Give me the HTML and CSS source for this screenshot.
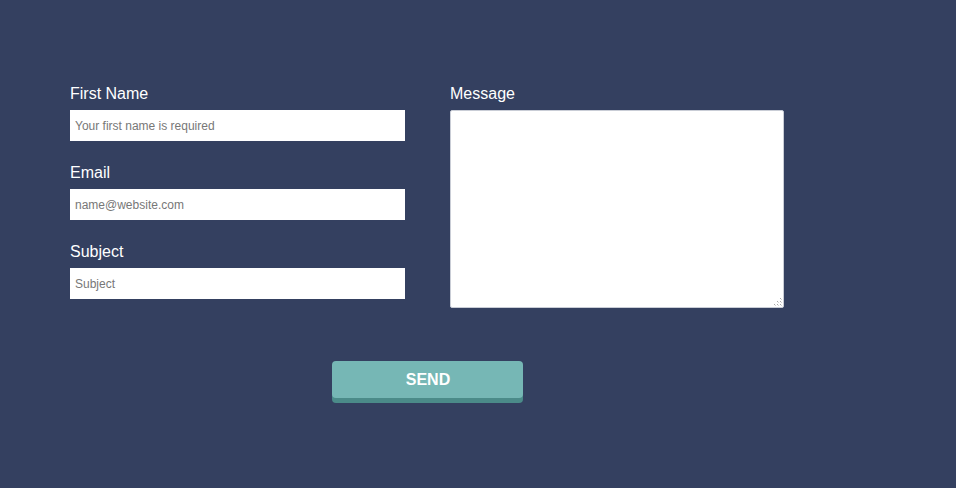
FILE: index.html
```html
<!DOCTYPE html>
<html>
<head>
<meta charset="utf-8">
<link rel="stylesheet" href="styles.css">
</head>
<body>
<form class="contact">
  <div class="columns">
    <div class="col-left">
      <div class="field">
        <label class="label" for="fn">First Name</label>
        <input class="input" id="fn" type="text" placeholder="Your first name is required">
      </div>
      <div class="field">
        <label class="label" for="em">Email</label>
        <input class="input" id="em" type="text" placeholder="name@website.com">
      </div>
      <div class="field">
        <label class="label" for="sb">Subject</label>
        <input class="input" id="sb" type="text" placeholder="Subject">
      </div>
    </div>
    <div class="col-right">
      <div class="field">
        <label class="label" for="msg">Message</label>
        <div class="msg-wrap">
          <textarea class="textarea" id="msg"></textarea>
          <svg class="grip" width="9" height="9" viewBox="0 0 9 9">
            <rect x="7" y="1" width="1" height="1" fill="#a9a9a9"/>
            <rect x="4" y="4" width="1" height="1" fill="#a9a9a9"/>
            <rect x="7" y="4" width="1" height="1" fill="#a9a9a9"/>
            <rect x="1" y="7" width="1" height="1" fill="#a9a9a9"/>
            <rect x="4" y="7" width="1" height="1" fill="#a9a9a9"/>
            <rect x="7" y="7" width="1" height="1" fill="#a9a9a9"/>
            <rect x="8" y="2" width="1" height="1" fill="#d6d6d6"/>
            <rect x="5" y="5" width="1" height="1" fill="#d6d6d6"/>
            <rect x="8" y="5" width="1" height="1" fill="#d6d6d6"/>
            <rect x="2" y="8" width="1" height="1" fill="#d6d6d6"/>
            <rect x="5" y="8" width="1" height="1" fill="#d6d6d6"/>
            <rect x="8" y="8" width="1" height="1" fill="#d6d6d6"/>
          </svg>
        </div>
      </div>
    </div>
  </div>
  <div class="actions">
    <button class="send" type="button">SEND</button>
  </div>
</form>
</body>
</html>
```

FILE: styles.css
```css
html, body {
  margin: 0;
  padding: 0;
}
body {
  background: #344060;
  width: 956px;
  height: 488px;
  font-family: "Liberation Sans", Arial, sans-serif;
  overflow: hidden;
}
.contact {
  padding: 84px 0 0 70px;
  width: 714px;
}
.columns {
  display: flex;
  gap: 45px;
}
.col-left {
  width: 335px;
  display: flex;
  flex-direction: column;
  gap: 22px;
}
.col-right {
  width: 334px;
}
.field {
  display: flex;
  flex-direction: column;
}
.label {
  color: #ffffff;
  font-size: 16px;
  line-height: 18px;
  padding-top: 1px;
  margin-bottom: 7px;
}
.input {
  box-sizing: border-box;
  width: 335px;
  height: 31px;
  border: none;
  border-radius: 0;
  padding: 0 5px;
  margin: 0;
  background: #ffffff;
  font-family: "Liberation Sans", Arial, sans-serif;
  font-size: 12px;
  color: #333;
  outline: none;
}
.input::placeholder {
  color: #777777;
  opacity: 1;
}
.msg-wrap {
  position: relative;
  width: 334px;
  height: 198px;
}
.textarea {
  display: block;
  box-sizing: border-box;
  width: 334px;
  height: 198px;
  margin: 0;
  border: 1px solid #c9cdd6;
  border-radius: 2px;
  background: #ffffff;
  padding: 4px;
  font-family: "Liberation Sans", Arial, sans-serif;
  font-size: 12px;
  outline: none;
  resize: none;
}
.grip {
  position: absolute;
  right: 2px;
  bottom: 2px;
  display: block;
}
.actions {
  display: flex;
  justify-content: center;
  margin-top: 53px;
}
.send {
  width: 191px;
  height: 37px;
  border: none;
  border-radius: 4px;
  background: #76b7b5;
  box-shadow: 0 5px 0 #4b8b89;
  color: #ffffff;
  font-family: "Liberation Sans", Arial, sans-serif;
  font-weight: bold;
  font-size: 16px;
  padding: 0 0 0 2px;
  cursor: pointer;
}
```
